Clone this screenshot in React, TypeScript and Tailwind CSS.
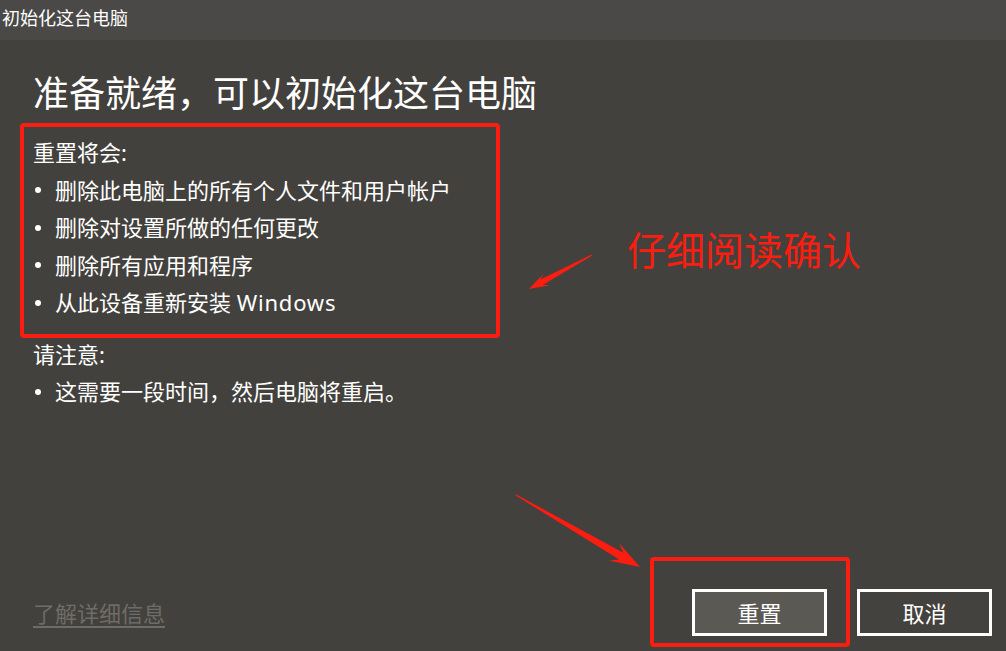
const RED = '#fb1d0f';

type Pt = [number, number];

// tapered annotation arrow, tail -> tip
function arrowPoints(tail: Pt, tip: Pt, headLen: number, headW: number, neckW: number) {
  const dx = tip[0] - tail[0];
  const dy = tip[1] - tail[1];
  const len = Math.hypot(dx, dy);
  const ux = dx / len;
  const uy = dy / len;
  const nx = -uy;
  const ny = ux;
  const neck: Pt = [tip[0] - ux * headLen * 0.72, tip[1] - uy * headLen * 0.72];
  const barb: Pt = [tip[0] - ux * headLen, tip[1] - uy * headLen];
  const pts: Pt[] = [
    [tail[0] + nx * 0.6, tail[1] + ny * 0.6],
    [neck[0] + (nx * neckW) / 2, neck[1] + (ny * neckW) / 2],
    [barb[0] + (nx * headW) / 2, barb[1] + (ny * headW) / 2],
    tip,
    [barb[0] - (nx * headW) / 2, barb[1] - (ny * headW) / 2],
    [neck[0] - (nx * neckW) / 2, neck[1] - (ny * neckW) / 2],
    [tail[0] - nx * 0.6, tail[1] - ny * 0.6],
  ];
  return pts.map((p) => p.join(',')).join(' ');
}

function Bullet({ children }: { children: React.ReactNode }) {
  return (
    <li className="flex items-center">
      <span className="w-[22px] shrink-0 pl-[2px]">
        <span className="block h-[6px] w-[6px] rounded-full bg-white" />
      </span>
      <span>{children}</span>
    </li>
  );
}

export default function App() {
  return (
    <div
      className="relative flex h-[651px] w-[1006px] flex-col overflow-hidden bg-[#43413d] text-white"
      style={{ fontFamily: '"Noto Sans", "Noto Sans CJK SC", sans-serif' }}
    >
      <div className="flex h-[40px] items-start bg-[#4a4947] pl-[2px] pt-[6px] text-[18px] leading-[24px]">
        初始化这台电脑
      </div>

      <div className="pl-[33px]">
        <h1 className="mt-[32px] text-[36px] leading-[44px]">准备就绪，可以初始化这台电脑</h1>

        <div className="mt-[18px] text-[22px] leading-[37.5px]">
          <p>重置将会:</p>
          <ul>
            <Bullet>删除此电脑上的所有个人文件和用户帐户</Bullet>
            <Bullet>删除对设置所做的任何更改</Bullet>
            <Bullet>删除所有应用和程序</Bullet>
            <Bullet>
              从此设备重新安装 <span className="tracking-[0.8px]">Windows</span>
            </Bullet>
          </ul>
          <p className="mt-[14px]">请注意:</p>
          <ul>
            <Bullet>这需要一段时间，然后电脑将重启。</Bullet>
          </ul>
        </div>
      </div>

      <div className="mt-auto flex items-center justify-between pb-[15px] pl-[33px] pr-[14px]">
        <a className="text-[22px] leading-[30px] text-[#6e6c68] underline underline-offset-[4px]">了解详细信息</a>
        <div className="flex gap-[30px]">
          <button className="h-[47px] w-[135px] border-[3px] border-white bg-[#5b5954] text-[22px] leading-none">
            重置
          </button>
          <button className="h-[47px] w-[135px] border-[3px] border-white bg-[#44423e] text-[22px] leading-none">
            取消
          </button>
        </div>
      </div>

      {/* annotations */}
      <div
        className="absolute left-[20px] top-[123px] h-[215px] w-[480px] rounded-[4px] border-[4px]"
        style={{ borderColor: RED }}
      />
      <div
        className="absolute left-[650px] top-[557px] h-[90px] w-[200px] rounded-[4px] border-[4px]"
        style={{ borderColor: RED }}
      />
      <div
        className="absolute left-[627px] top-[225px] text-[39px] leading-[50px]"
        style={{ color: RED }}
      >
        仔细阅读确认
      </div>
      <svg className="pointer-events-none absolute left-0 top-0" width="1006" height="651">
        <polygon points={arrowPoints([592, 255], [529, 289], 20, 13, 6)} fill={RED} />
        <polygon points={arrowPoints([516, 495], [640, 567], 30, 20, 8)} fill={RED} />
      </svg>
    </div>
  );
}
